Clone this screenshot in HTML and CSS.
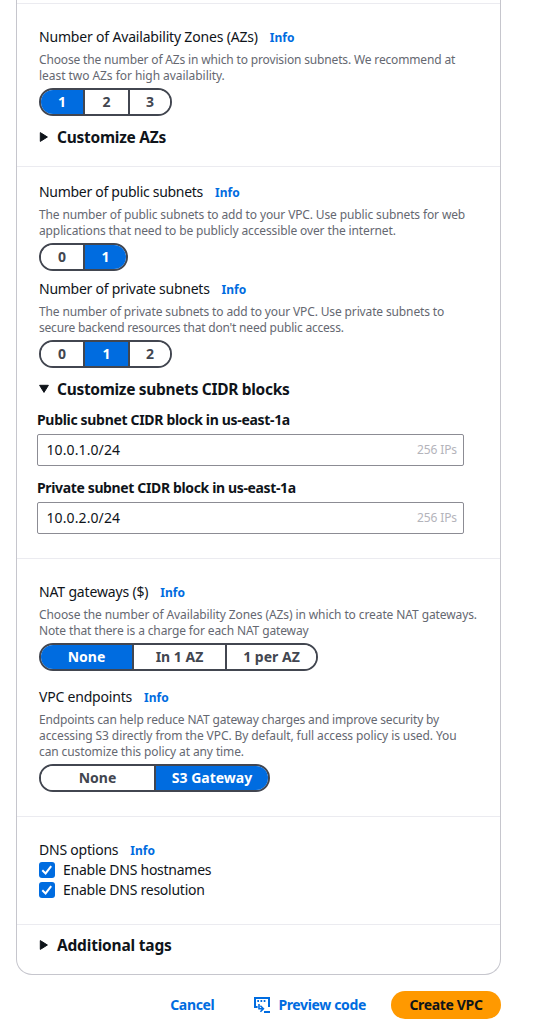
FILE: index.html
```html
<!DOCTYPE html>
<html lang="en">
<head>
<meta charset="utf-8">
<title>Create VPC</title>
<link rel="stylesheet" href="styles.css">
</head>
<body>
<main class="panel">
  <section class="section section-zones">
    <div class="label-row"><span class="label t-zones">Number of Availability Zones (AZs)</span><a class="info">Info</a></div>
    <p class="description"><span class="d1">Choose the number of AZs in which to provision subnets. We recommend at</span><br><span class="d2">least two AZs for high availability.</span></p>
    <div class="segmented"><button class="seg seg-on w-first">1</button><button class="seg w-middle">2</button><button class="seg w-last">3</button></div>
    <div class="expander expander-zones"><svg class="caret" viewBox="0 0 10 10"><path d="M1.3.6v8.8L8.4 5z"/></svg><span class="e1">Customize AZs</span></div>
  </section>

  <section class="section section-subnets">
    <div class="label-row"><span class="label t-public">Number of public subnets</span><a class="info">Info</a></div>
    <p class="description"><span class="d3">The number of public subnets to add to your VPC. Use public subnets for web</span><br><span class="d4">applications that need to be publicly accessible over the internet.</span></p>
    <div class="segmented"><button class="seg w-first">0</button><button class="seg seg-on w-pair">1</button></div>
    <div class="label-row follow"><span class="label t-private">Number of private subnets</span><a class="info">Info</a></div>
    <p class="description"><span class="d5">The number of private subnets to add to your VPC. Use private subnets to</span><br><span class="d6">secure backend resources that don't need public access.</span></p>
    <div class="segmented"><button class="seg w-first">0</button><button class="seg seg-on w-middle">1</button><button class="seg w-last">2</button></div>
    <div class="expander expander-cidr"><svg class="caret" viewBox="0 0 10 10"><path d="M.6 1.3h8.8L5 8.4z"/></svg><span class="e2">Customize subnets CIDR blocks</span></div>
    <div class="field"><span class="field-label f1">Public subnet CIDR block in us-east-1a</span><div class="field-box"><span class="field-value">10.0.1.0/24</span><span class="field-hint">256 IPs</span></div></div>
    <div class="field"><span class="field-label f2">Private subnet CIDR block in us-east-1a</span><div class="field-box"><span class="field-value">10.0.2.0/24</span><span class="field-hint">256 IPs</span></div></div>
  </section>

  <section class="section section-nat">
    <div class="label-row"><span class="label t-nat">NAT gateways ($)</span><a class="info">Info</a></div>
    <p class="description"><span class="d7">Choose the number of Availability Zones (AZs) in which to create NAT gateways.</span><br><span class="d8">Note that there is a charge for each NAT gateway</span></p>
    <div class="segmented"><button class="seg seg-on w-nat">None</button><button class="seg w-nat-mid">In 1 AZ</button><button class="seg w-nat">1 per AZ</button></div>
    <div class="label-row endpoints"><span class="label t-vpc">VPC endpoints</span><a class="info">Info</a></div>
    <p class="description"><span class="d9">Endpoints can help reduce NAT gateway charges and improve security by</span><br><span class="d10">accessing S3 directly from the VPC. By default, full access policy is used. You</span><br><span class="d11">can customize this policy at any time.</span></p>
    <div class="segmented"><button class="seg w-none">None</button><button class="seg seg-on w-gateway">S3 Gateway</button></div>
  </section>

  <section class="section section-dns">
    <div class="label-row"><span class="label t-dns">DNS options</span><a class="info">Info</a></div>
    <div class="check"><span class="box"><svg viewBox="0 0 16 16"><path d="M3.3 8.2l3.3 3.2 5.6-7.2"/></svg></span><span class="check-text">Enable DNS hostnames</span></div>
    <div class="check"><span class="box"><svg viewBox="0 0 16 16"><path d="M3.3 8.2l3.3 3.2 5.6-7.2"/></svg></span><span class="check-text">Enable DNS resolution</span></div>
  </section>

  <section class="section section-tags">
    <div class="expander"><svg class="caret" viewBox="0 0 10 10"><path d="M1.3.6v8.8L8.4 5z"/></svg><span class="e3">Additional tags</span></div>
  </section>
</main>

<footer class="actions">
  <a class="action-link cancel">Cancel</a>
  <a class="action-link preview"><svg class="code-icon" viewBox="0 0 16 16"><path d="M3.6 10H1V1h14v9M10 15h6"/><path class="arrow" d="M5 7v4.8h4M6.4 8.8l3 3-3 3"/><path class="dots" d="M3.3 4H5M6.5 4h1.7M9.7 4h1.7"/></svg><span>Preview code</span></a>
  <button class="create"><span>Create VPC</span></button>
</footer>
</body>
</html>
```
FILE: styles.css
```css
* { box-sizing: border-box; }
body {
  margin: 0;
  background: #fff;
  color: #0f141a;
  font: 14px/20px "Noto Sans", "Open Sans", sans-serif;
  white-space: nowrap;
}
.panel {
  width: 485px;
  height: 975px;
  margin-left: 16px;
  border: 1px solid #c6c6cd;
  border-top: 0;
  border-radius: 0 0 16px 16px;
  padding-top: 3px;
}
.section {
  border-top: 1px solid #ebebf0;
  padding: 23px 22px 0;
}
.section-zones { height: 163px; }
.section-subnets { height: 392px; padding-top: 15px; }
.section-nat { height: 258px; }
.section-dns { height: 108px; }
.section-tags { padding-top: 10px; }

.label-row { display: flex; gap: 12px; height: 20px; }
.info { color: #006ce0; font-size: 12px; font-weight: 700; line-height: 21px; }
.description {
  margin: 5px 0 4px;
  color: #656871;
  font-size: 12px;
  line-height: 16px;
}
.follow { margin-top: 8px; }
.endpoints { margin-top: 16px; }

.t-zones { letter-spacing: -.18px; }
.t-public { letter-spacing: -.29px; }
.t-private { letter-spacing: -.26px; }
.t-nat { letter-spacing: -.16px; }
.t-vpc { letter-spacing: -.2px; }
.t-dns { letter-spacing: -.22px; }
.d1 { letter-spacing: -.155px; }
.d2 { letter-spacing: -.05px; }
.d3 { letter-spacing: -.13px; }
.d4 { letter-spacing: -.12px; }
.d5 { letter-spacing: -.135px; }
.d6 { letter-spacing: -.2px; }
.d7 { letter-spacing: -.1px; }
.d8 { letter-spacing: -.13px; }
.d9 { letter-spacing: -.16px; }
.d10 { letter-spacing: -.095px; }
.d11 { letter-spacing: -.11px; }
.e1 { letter-spacing: -.26px; }
.e2 { letter-spacing: -.31px; }
.e3 { letter-spacing: -.2px; }
.f1 { letter-spacing: -.32px; }
.f2 { letter-spacing: -.36px; }

.segmented {
  display: flex;
  width: max-content;
  height: 28px;
  border: 2px solid #424650;
  border-radius: 14px;
  overflow: hidden;
}
.seg {
  border: 0;
  padding: 0;
  background: #fff;
  color: #424650;
  font: 700 14px/24px "Noto Sans", "Open Sans", sans-serif;
}
.seg + .seg { border-left: 2px solid #424650; }
.seg-on { background: #006ce0; color: #fff; }
.w-first { width: 42px; }
.w-middle { width: 45px; }
.w-last { width: 42px; }
.w-pair { width: 43px; }
.w-nat { width: 91px; }
.w-nat-mid { width: 93px; }
.w-none { width: 113px; }
.w-gateway { width: 114px; }

.expander {
  display: flex;
  align-items: center;
  gap: 8px;
  height: 20px;
  font-size: 15.5px;
  font-weight: 700;
}
.expander-zones, .expander-cidr { margin-top: 11px; }
.caret { width: 10px; height: 10px; fill: #0f141a; stroke: #0f141a; stroke-width: 1; stroke-linejoin: round; }

.field { width: 427px; margin: 11px 0 0 -2px; }
.field + .field { margin-top: 12px; }
.field-label { display: block; height: 24px; font-weight: 700; }
.field-box {
  display: flex;
  align-items: center;
  justify-content: space-between;
  height: 32px;
  padding: 0 6px 0 8.5px;
  border: 1px solid #8c8c94;
  border-radius: 2px;
}
.field-value { letter-spacing: .1px; }
.field-hint { color: #b4b4bb; font-size: 12px; letter-spacing: -.1px; }

.check { display: flex; align-items: center; gap: 8px; height: 20px; }
.check-text { letter-spacing: -.25px; }
.box { width: 16px; height: 16px; border-radius: 3px; background: #006ce0; }
.box svg { display: block; fill: none; stroke: #fff; stroke-width: 2; }

.actions {
  display: flex;
  align-items: center;
  justify-content: flex-end;
  width: 501px;
  height: 28px;
  margin-top: 16px;
  font-weight: 700;
  letter-spacing: -.35px;
}
.action-link { display: flex; align-items: center; color: #006ce0; }
.cancel { margin-right: 40px; }
.preview { gap: 8px; margin-right: 25px; }
.code-icon { width: 16px; height: 16px; fill: none; stroke: #006ce0; stroke-width: 2; }
.arrow { stroke-width: 1.6; }
.create {
  width: 110px;
  height: 28px;
  border: 0;
  border-radius: 14px;
  padding: 0;
  background: #ff9900;
  color: #0f141a;
  font: 700 14px/28px "Noto Sans", "Open Sans", sans-serif;
  letter-spacing: -.35px;
}
```
